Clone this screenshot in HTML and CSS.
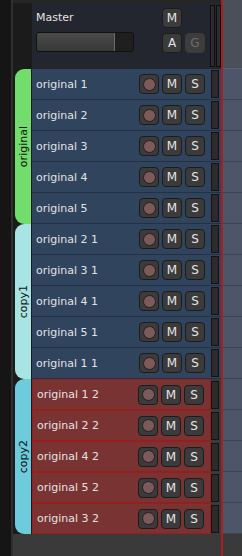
FILE: index.html
```html
<!DOCTYPE html>
<html lang="en">
<head>
    <meta charset="UTF-8">
    <meta name="viewport" content="width=device-width, initial-scale=1.0">
    <title>Mixer</title>
    <link rel="stylesheet" href="styles.css">
</head>
<body>
    <div class="app">
        <div class="gutter"></div>

        <div class="mixer">
            <!-- Master strip -->
            <div class="master">
                <div class="master-main">
                    <div class="master-left">
                        <span class="master-name">Master</span>
                        <div class="fader"><div class="fader-fill"></div></div>
                    </div>
                    <div class="master-btns">
                        <button class="btn">M</button>
                        <span></span>
                        <button class="btn">A</button>
                        <button class="btn off">G</button>
                    </div>
                    <div class="master-meters"><span></span><span></span></div>
                </div>
            </div>

            <div class="group">
                <div class="tab tab-green"><span>original</span></div>
                <div class="tracks">
                    <div class="track blue"><div class="strip"><span class="name">original 1</span><button class="btn rec"><i></i></button><button class="btn">M</button><button class="btn">S</button></div><div class="meter"></div></div>
                    <div class="track blue"><div class="strip"><span class="name">original 2</span><button class="btn rec"><i></i></button><button class="btn">M</button><button class="btn">S</button></div><div class="meter"></div></div>
                    <div class="track blue"><div class="strip"><span class="name">original 3</span><button class="btn rec"><i></i></button><button class="btn">M</button><button class="btn">S</button></div><div class="meter"></div></div>
                    <div class="track blue"><div class="strip"><span class="name">original 4</span><button class="btn rec"><i></i></button><button class="btn">M</button><button class="btn">S</button></div><div class="meter"></div></div>
                    <div class="track blue"><div class="strip"><span class="name">original 5</span><button class="btn rec"><i></i></button><button class="btn">M</button><button class="btn">S</button></div><div class="meter"></div></div>
                </div>
            </div>

            <div class="group">
                <div class="tab tab-light"><span>copy1</span></div>
                <div class="tracks">
                    <div class="track blue"><div class="strip"><span class="name">original 2 1</span><button class="btn rec"><i></i></button><button class="btn">M</button><button class="btn">S</button></div><div class="meter"></div></div>
                    <div class="track blue"><div class="strip"><span class="name">original 3 1</span><button class="btn rec"><i></i></button><button class="btn">M</button><button class="btn">S</button></div><div class="meter"></div></div>
                    <div class="track blue"><div class="strip"><span class="name">original 4 1</span><button class="btn rec"><i></i></button><button class="btn">M</button><button class="btn">S</button></div><div class="meter"></div></div>
                    <div class="track blue"><div class="strip"><span class="name">original 5 1</span><button class="btn rec"><i></i></button><button class="btn">M</button><button class="btn">S</button></div><div class="meter"></div></div>
                    <div class="track blue"><div class="strip"><span class="name">original 1 1</span><button class="btn rec"><i></i></button><button class="btn">M</button><button class="btn">S</button></div><div class="meter"></div></div>
                </div>
            </div>

            <div class="group">
                <div class="tab tab-cyan"><span>copy2</span></div>
                <div class="tracks">
                    <div class="track red"><div class="strip"><span class="name">original 1 2</span><button class="btn rec"><i></i></button><button class="btn">M</button><button class="btn">S</button></div><div class="meter"></div></div>
                    <div class="track red"><div class="strip"><span class="name">original 2 2</span><button class="btn rec"><i></i></button><button class="btn">M</button><button class="btn">S</button></div><div class="meter"></div></div>
                    <div class="track red"><div class="strip"><span class="name">original 4 2</span><button class="btn rec"><i></i></button><button class="btn">M</button><button class="btn">S</button></div><div class="meter"></div></div>
                    <div class="track red"><div class="strip"><span class="name">original 5 2</span><button class="btn rec"><i></i></button><button class="btn">M</button><button class="btn">S</button></div><div class="meter"></div></div>
                    <div class="track red"><div class="strip"><span class="name">original 3 2</span><button class="btn rec"><i></i></button><button class="btn">M</button><button class="btn">S</button></div><div class="meter"></div></div>
                </div>
            </div>

            <div class="mixer-fill"></div>
        </div>

        <!-- Timeline edge -->
        <div class="timeline">
            <div class="tl-head"></div>
            <div class="tl-row"></div>
            <div class="tl-row"></div>
            <div class="tl-row"></div>
            <div class="tl-row"></div>
            <div class="tl-row"></div>
            <div class="tl-row"></div>
            <div class="tl-row"></div>
            <div class="tl-row"></div>
            <div class="tl-row"></div>
            <div class="tl-row"></div>
            <div class="tl-row"></div>
            <div class="tl-row"></div>
            <div class="tl-row"></div>
            <div class="tl-row"></div>
            <div class="tl-row"></div>
            <div class="tl-fill"></div>
        </div>
    </div>
</body>
</html>
```

FILE: styles.css
```css
* {
    box-sizing: border-box;
}

body {
    margin: 0;
    padding: 0;
    background-color: #141414;
    font-family: "DejaVu Sans", sans-serif;
    font-size: 11px;
    color: #e2e2e2;
    overflow: hidden;
}

.app {
    display: flex;
    width: 242px;
    height: 556px;
}

.gutter {
    width: 13px;
    background-color: #151515;
    border-right: 2px solid #2f2f2f;
}

.mixer {
    width: 208px;
    display: flex;
    flex-direction: column;
    background-color: #1b1b1b;
}

/* Master */
.master {
    height: 69px;
    padding-left: 19px;
    border-top: 3px solid #262626;
}

.master-main {
    height: 100%;
    display: flex;
    padding: 5px 0 0 4px;
    background-color: #23262e;
}

.master-left {
    width: 98px;
    display: flex;
    flex-direction: column;
}

.master-name {
    height: 20px;
    line-height: 20px;
}

.fader {
    margin-top: 4px;
    height: 20px;
    border: 1px solid #111;
    border-radius: 3px;
    background-color: #1f1f1f;
    overflow: hidden;
}

.fader-fill {
    width: 78px;
    height: 100%;
    background: linear-gradient(#4a4a4a, #383838);
    border-right: 1px solid #6a6a6a;
}

.master-btns {
    margin-left: 28px;
    display: grid;
    grid-template-columns: 20px 20px;
    grid-template-rows: 20px 20px;
    column-gap: 3px;
    row-gap: 5px;
}

.master-meters {
    margin: -3px 0 0 5px;
    height: 62px;
    display: flex;
    gap: 1px;
}

.master-meters span {
    width: 5px;
    background-color: #2c2c2c;
    border: 1px solid #0e0e0e;
}

/* Buttons */
.btn {
    width: 20px;
    height: 20px;
    padding: 0;
    border: 1px solid #1c1c1c;
    border-radius: 4px;
    background-color: #3b3b3b;
    color: #e4e4e4;
    font-family: "DejaVu Sans", sans-serif;
    font-size: 12px;
    display: flex;
    align-items: center;
    justify-content: center;
}

.btn.off {
    border-color: #3a3a3a;
    background-color: #3d3d3d;
    color: #6c6c6c;
}

.btn.rec i {
    width: 13px;
    height: 13px;
    border-radius: 50%;
    background-color: #7c5a5a;
    border: 1px solid #2a1c1c;
}

/* Groups */
.group {
    display: flex;
}

.tab {
    width: 16px;
    margin-left: 2px;
    border-radius: 9px 0 0 9px;
    display: flex;
    align-items: center;
    justify-content: center;
    color: #121212;
}

.tab span {
    writing-mode: vertical-rl;
    transform: rotate(180deg);
}

.tab-green {
    background-color: #72dd6c;
}

.tab-light {
    background-color: #a8e4e4;
}

.tab-cyan {
    background-color: #6ecbdc;
}

.tracks {
    flex: 1;
    padding-left: 1px;
}

.track {
    height: 31px;
    display: flex;
    align-items: center;
}

.strip {
    flex: 1;
    height: 100%;
    display: flex;
    align-items: center;
    gap: 3px;
    padding: 0 6px 0 4px;
}

.name {
    flex: 1;
}

.meter {
    width: 8px;
    height: 28px;
    margin-right: 2px;
    background-color: #2b2b2b;
    border: 1px solid #131313;
}

.track.blue {
    background-color: #30445e;
    border-bottom: 1px solid #223146;
}

.track.red {
    background-color: #3a3a3a;
}

.track.red .strip {
    background-color: #7a3333;
    border: 1px solid #951e1e;
}

.mixer-fill {
    flex: 1;
    background-color: #3a3a3a;
}

/* Timeline */
.timeline {
    flex: 1;
    display: flex;
    flex-direction: column;
    border-left: 2px solid #b41a1a;
}

.tl-head {
    height: 69px;
    background-color: #4a4f59;
    border-bottom: 1px solid #5b616c;
}

.tl-row {
    height: 31px;
    background-color: #4d5668;
    border-bottom: 1px solid #3d4452;
}

.tl-fill {
    flex: 1;
    background-color: #3a3a3a;
}
```
